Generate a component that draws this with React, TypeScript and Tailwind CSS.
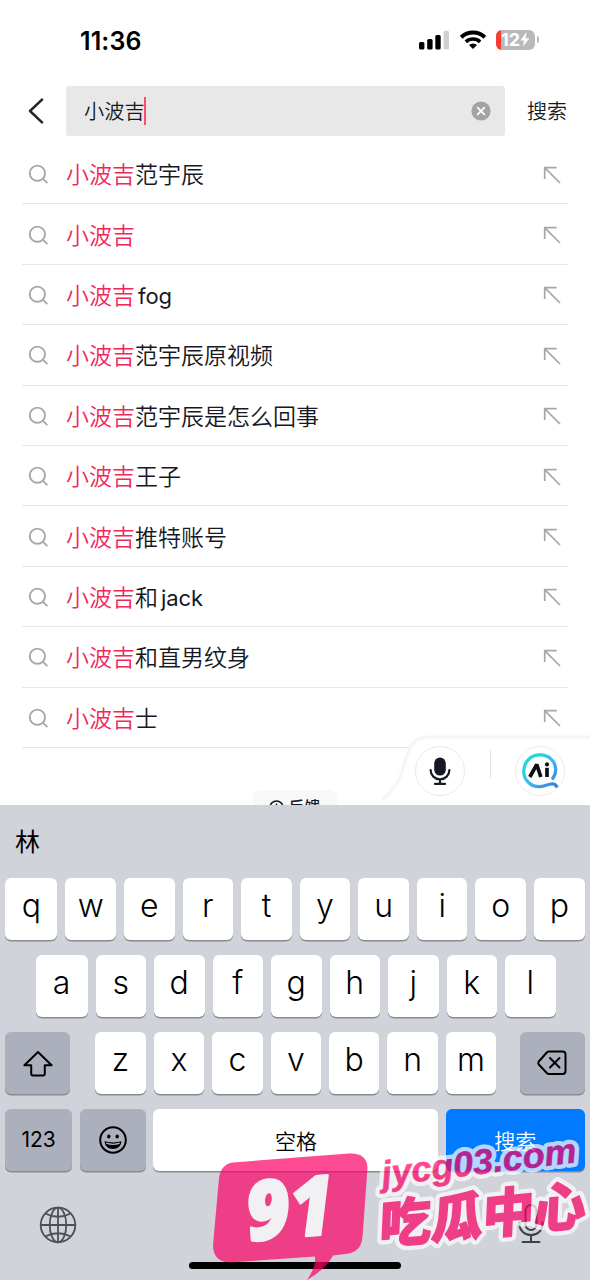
import { ReactNode } from "react";

const SUGGESTIONS: { rest: string; latin?: string }[] = [
  { rest: "范宇辰" },
  { rest: "" },
  { rest: "", latin: "fog" },
  { rest: "范宇辰原视频" },
  { rest: "范宇辰是怎么回事" },
  { rest: "王子" },
  { rest: "推特账号" },
  { rest: "和", latin: "jack" },
  { rest: "和直男纹身" },
  { rest: "士" },
];

function StatusBar() {
  return (
    <div className="flex h-[86px] shrink-0 items-start justify-between pl-[80px] pr-[51px]">
      <span className="mt-[24px] text-[25px] leading-[34px] font-semibold tracking-[0.1px] text-black">11:36</span>
      <div className="mt-[29px] flex items-center">
        <svg width="31" height="20" viewBox="0 0 31 20">
          <rect x="0" y="12" width="5.4" height="7.5" rx="1.5" />
          <rect x="8.2" y="9" width="5.4" height="10.5" rx="1.5" />
          <rect x="16.3" y="5" width="5.4" height="14.5" rx="1.5" />
          <rect x="24.6" y="0.8" width="5.4" height="18.7" rx="1.5" fill="#d0d0d0" />
        </svg>
        <svg className="ml-[9px]" width="28" height="21" viewBox="0 0 28 21" fill="none" stroke="#000" strokeWidth="4">
          <path d="M2.2 8.2a17 17 0 0 1 23.6 0" />
          <path d="M6.9 12.9a10.3 10.3 0 0 1 14.2 0" strokeWidth="3.6" />
          <path d="M14 20l-4-4a5.8 5.8 0 0 1 8 0z" fill="#000" stroke="none" />
        </svg>
        <div className="ml-[9px] flex items-center">
          <div className="flex h-[20px] w-[39px] items-center overflow-hidden rounded-[6px] bg-[#b9b9b9]">
            <div className="h-full w-[5px] bg-[#fb3b30]" />
            <span className="text-[18px] leading-5 font-bold text-white">12</span>
            <svg width="10" height="15" viewBox="0 0 10 15" fill="#fff">
              <path d="M6.6 0L.3 8.4h3.8L2.7 15l6.7-8.7H5.6z" />
            </svg>
          </div>
          <div className="ml-[1.5px] h-[7px] w-[2.5px] rounded-r-full bg-[#b9b9b9]" />
        </div>
      </div>
    </div>
  );
}

function SearchBar() {
  return (
    <div className="flex h-[50px] shrink-0 items-center text-[#161823]">
      <svg className="ml-[28px]" width="17" height="28" viewBox="0 0 17 28" fill="none" stroke="#25262e" strokeWidth="2.5">
        <path d="M14.8 1.8L2 14l12.8 12.2" strokeLinejoin="round" />
      </svg>
      <div className="ml-[21px] flex h-[50px] w-[439px] items-center rounded-[3px] bg-[#e8e8e8] pl-[18px] pr-[14px]">
        <span className="pt-[2px] text-[20.2px] leading-7 font-[350]">小波吉</span>
        <span className="-ml-[1px] h-[28px] w-[2.5px] bg-[#fe4d74]" />
        <svg className="ml-auto" width="20" height="20" viewBox="0 0 20 20">
          <circle cx="10" cy="10" r="9.6" fill="#a3a3a3" />
          <path d="M6.2 6.2l7.6 7.6M13.8 6.2l-7.6 7.6" stroke="#fff" strokeWidth="1.8" />
        </svg>
      </div>
      <span className="ml-[22px] pt-[2px] text-[20px] leading-7 font-[350]">搜索</span>
    </div>
  );
}

function SuggestionList() {
  return (
    <ul className="mx-[22px] mt-[8px]">
      {SUGGESTIONS.map((s) => (
        <li key={s.rest + s.latin} className="flex h-[60.4px] items-center border-b border-[#e6e6e7] pt-[2px] pl-[6px] pr-[7px]">
          <svg width="21" height="21" viewBox="0 0 21 21" fill="none" stroke="#a6a7aa" strokeWidth="1.9">
            <circle cx="9.4" cy="9.2" r="7.6" />
            <path d="M14.7 14.6l4.7 4.5" />
          </svg>
          <span className="ml-[17px] pt-[1px] text-[23px] leading-8 font-[350] text-[#161823]">
            <span className="text-[#f0285a]">小波吉</span>
            {s.rest}
            {s.latin && <span className="ml-[3px] text-[22px] font-normal tracking-[-0.1px]">{s.latin}</span>}
          </span>
          <svg className="ml-auto" width="18" height="18" viewBox="0 0 18 18" fill="none" stroke="#a6a7aa" strokeWidth="1.7">
            <path d="M1.7 13V1.7h12M1.9 1.9L17 17" />
          </svg>
        </li>
      ))}
    </ul>
  );
}

function VoicePanel() {
  return (
    <div className="absolute right-0 bottom-0 h-[75px] w-[215px]">
      <svg className="absolute inset-0" width="215" height="75" viewBox="0 0 215 75">
        <path d="M0 75C20 69 24 52 28 39C34 17 37 7 55 7H216V75Z" fill="#fff" />
        <path d="M7 70C21 58 24 50 28 39C34 17 37 7 55 7H215" fill="none" stroke="#f4f4f4" strokeWidth="5" opacity=".4" />
        <path d="M7 70C21 58 24 50 28 39C34 17 37 7 55 7H215" fill="none" stroke="#f2f2f2" strokeWidth="1.4" />
      </svg>
      <div className="relative flex items-center pt-[16px] pl-[40px]">
        <div className="flex h-[50px] w-[50px] items-center justify-center rounded-full border border-[#eaeaea] bg-white">
          <svg width="22" height="30" viewBox="0 0 22 30" fill="none" stroke="#161823" strokeWidth="2.2" strokeLinecap="round">
            <rect x="5.2" y="1.6" width="11.6" height="18" rx="5.8" fill="#161823" stroke="none" />
            <path d="M1.6 14a9.4 9.4 0 0 0 18.8 0M11 23.5v4M6 27.9h10" />
          </svg>
        </div>
        <div className="mb-[14px] ml-[25px] h-[28px] w-px bg-[#e2e2e3]" />
        <div className="ml-[24px] flex h-[50px] w-[50px] items-center justify-center rounded-full border border-[#ededed] bg-white">
          <svg width="40" height="40" viewBox="0 0 40 40" fill="none">
            <defs>
              <linearGradient id="aiRing" x1="0" y1="0" x2="1" y2="1">
                <stop offset="0" stopColor="#12e5d0" />
                <stop offset=".5" stopColor="#3abdf0" />
                <stop offset="1" stopColor="#3a77e5" />
              </linearGradient>
            </defs>
            <path
              d="M32 28.5C37.5 22 36.5 13 31 8C25.5 3 15 2 8.5 8.5C2.5 14.5 2 25 8 31C13 36 20 36.5 26 34.3C31 32.5 35.5 31.5 37 36.500"
              stroke="url(#aiRing)"
              strokeWidth="3.2"
            />
            <path d="M9.8 26L16.8 13.5L20.8 26" stroke="#101014" strokeWidth="3.7" strokeLinejoin="bevel" />
            <path d="M27 16.800V26" stroke="#101014" strokeWidth="3.7" />
            <circle cx="27" cy="13.4" r="2.1" fill="#101014" />
          </svg>
        </div>
      </div>
    </div>
  );
}

function Key({ children, className }: { children?: ReactNode; className: string }) {
  return (
    <div className={`flex h-[62px] items-center justify-center rounded-[6px] shadow-[0_1.5px_0_#898b90] ${className}`}>
      {children}
    </div>
  );
}

function Letters({ keys }: { keys: string }) {
  return keys.split("").map((k, i) => (
    <Key key={k} className={`bg-white ${i === 0 && keys.length > 7 ? "w-[52px]" : "flex-1"}`}>
      <span className="-mt-[6px] text-[32px] leading-9 font-[350] text-black">{k}</span>
    </Key>
  ));
}

function Keyboard() {
  return (
    <div className="flex h-[475px] shrink-0 flex-col bg-[#d1d3db]">
      <div className="flex h-[73px] items-center pt-[3px] pl-[15px] text-[25px] text-black">林</div>
      <div className="flex flex-col gap-[15px]">
        <div className="flex gap-[8px] px-[5.4px]">
          <Letters keys="qwertyuiop" />
        </div>
        <div className="flex gap-[8px] pr-[34.5px] pl-[35.5px]">
          <Letters keys="asdfghjkl" />
        </div>
        <div className="flex justify-between px-[5.4px]">
          <Key className="w-[64.5px] bg-[#abb0bc]">
            <svg width="30" height="27" viewBox="0 0 30 27" fill="none" stroke="#000" strokeWidth="2" strokeLinejoin="round">
              <path d="M15 2L1.4 15.3H8.2V23.5Q8.2 25.4 10 25.4H20Q21.8 25.4 21.8 23.5V15.3H28.6Z" />
            </svg>
          </Key>
          <div className="ml-[1.6px] flex w-[401px] gap-[8px]">
            <Letters keys="zxcvbnm" />
          </div>
          <Key className="w-[64.5px] bg-[#abb0bc]">
            <svg width="30" height="26" viewBox="0 0 30 26" fill="none" stroke="#000" strokeWidth="2" strokeLinejoin="round" strokeLinecap="round">
              <path d="M12 1.5H25.5Q28.5 1.5 28.5 4.5V21Q28.5 24 25.5 24H12Q10.8 24 9.8 23L1.8 14.5Q.7 13 1.8 11.5L9.8 2.5Q10.8 1.5 12 1.5Z" />
              <path d="M13 8l9.5 9.5M22.5 8L13 17.5" />
            </svg>
          </Key>
        </div>
        <div className="flex px-[5.4px] text-[21px] text-black">
          <Key className="w-[66.5px] bg-[#abb0bc]">123</Key>
          <Key className="ml-[8px] w-[66px] bg-[#abb0bc]">
            <svg width="28" height="28" viewBox="0 0 28 28" fill="none" stroke="#000" strokeWidth="2">
              <circle cx="14" cy="14" r="12.8" />
              <ellipse cx="9.8" cy="10.5" rx="1.7" ry="2" fill="#000" stroke="none" />
              <ellipse cx="18.2" cy="10.5" rx="1.7" ry="2" fill="#000" stroke="none" />
              <path d="M5.5 15.3Q14 17.5 22.5 15.3C22 20.5 18.5 23 14 23S6 20.5 5.5 15.3Z" fill="#000" stroke="none" />
              <path d="M7.3 17.2Q14 19.5 20.7 17.2" stroke="#abb0bc" strokeWidth="1.4" />
            </svg>
          </Key>
          <Key className="ml-[7.5px] w-[285px] bg-white">
            <span className="pt-[3px] font-[350]">空格</span>
          </Key>
          <Key className="ml-[7.5px] flex-1 bg-[#007aff]">
            <span className="pt-[3px] font-[350] text-white">搜索</span>
          </Key>
        </div>
      </div>
      <div className="flex justify-between pt-[35px] pr-[44px] pl-[39px]">
        <svg width="38" height="38" viewBox="0 0 38 38" fill="none" stroke="#4d5057" strokeWidth="1.8">
          <circle cx="19" cy="19" r="17.3" />
          <ellipse cx="19" cy="19" rx="8.3" ry="17.3" />
          <path d="M19 1.7v34.6M1.7 19h34.6M6.2 7.5Q19 14 31.8 7.5M6.2 30.5Q19 24 31.8 30.5" />
        </svg>
        <svg className="-mt-[2px]" width="30" height="40" viewBox="0 0 30 40" fill="none" stroke="#3f4248" strokeWidth="2" strokeLinecap="round">
          <rect x="9.5" y="1" width="11" height="25" rx="5.5" />
          <path d="M3.5 18v2.5a11.5 10.5 0 0 0 23 0V18M15 31v7M6.5 38h17" />
        </svg>
      </div>
    </div>
  );
}

function StampText({ thin, wide }: { thin: number; wide: number }) {
  return (
    <>
      <text transform="translate(383 1186) rotate(-7)" fontFamily="Liberation Sans, sans-serif" fontSize="35" fontWeight="700" fontStyle="italic" textLength="196" lengthAdjust="spacingAndGlyphs" strokeWidth={thin}>
        jycg03.com
      </text>
      <text transform="translate(379 1244) rotate(-5.5) skewX(-8)" fontFamily="Noto Sans CJK SC, sans-serif" fontSize="52" fontWeight="900" textLength="207" lengthAdjust="spacingAndGlyphs" strokeWidth={wide}>
        吃瓜中心
      </text>
    </>
  );
}

function Stamp() {
  return (
    <svg className="absolute bottom-0 left-[200px] opacity-70" width="390" height="150" viewBox="200 1130 390 150" strokeLinejoin="round">
      <path
        d="M233 1162.5L349 1153.5Q367 1152.5 367.5 1168L362.5 1237Q361 1253 345 1254L333 1255.5Q326 1269 307 1280Q316 1267 315 1256.5L230 1262.5Q213 1262 213 1245L219 1178Q221 1164 233 1162.5Z"
        fill="#fc0065"
      />
      <text
        transform="translate(248 1241) rotate(-5) skewX(-1)"
        fontFamily="Noto Sans, Open Sans, sans-serif"
        fontSize="82"
        fontWeight="900"
        fontStyle="italic"
        textLength="88"
        lengthAdjust="spacingAndGlyphs"
        fill="#fff"
        stroke="#fff"
        strokeWidth="2.5"
      >
        91
      </text>
      <g fill="#fff" stroke="#fff">
        <StampText thin={9} wide={10} />
      </g>
      <g fill="#fc0065" stroke="#fc0065">
        <StampText thin={0.6} wide={1.5} />
      </g>
    </svg>
  );
}

export default function App() {
  return (
    <div className="relative flex h-[1280px] w-[590px] flex-col overflow-hidden bg-white font-['Inter','Noto_Sans_CJK_SC',sans-serif]">
      <main className="relative flex h-[805px] shrink-0 flex-col overflow-hidden">
        <StatusBar />
        <SearchBar />
        <SuggestionList />
        <div className="absolute top-[790px] left-[253px] flex h-[34px] w-[84px] items-center justify-center gap-[4px] rounded-[8px] bg-[#f8f8f8] text-[16px] font-medium text-[#161823]">
          <svg width="15" height="15" viewBox="0 0 15 15" fill="none" stroke="#161823" strokeWidth="1.5">
            <circle cx="7.5" cy="7.5" r="6.5" />
            <path d="M7.5 3.5v5M7.5 10v1.5" />
          </svg>
          反馈
        </div>
        <VoicePanel />
      </main>
      <Keyboard />
      <div className="absolute bottom-[11px] left-[189px] h-[7px] w-[212px] rounded-full bg-black" />
      <Stamp />
    </div>
  );
}
